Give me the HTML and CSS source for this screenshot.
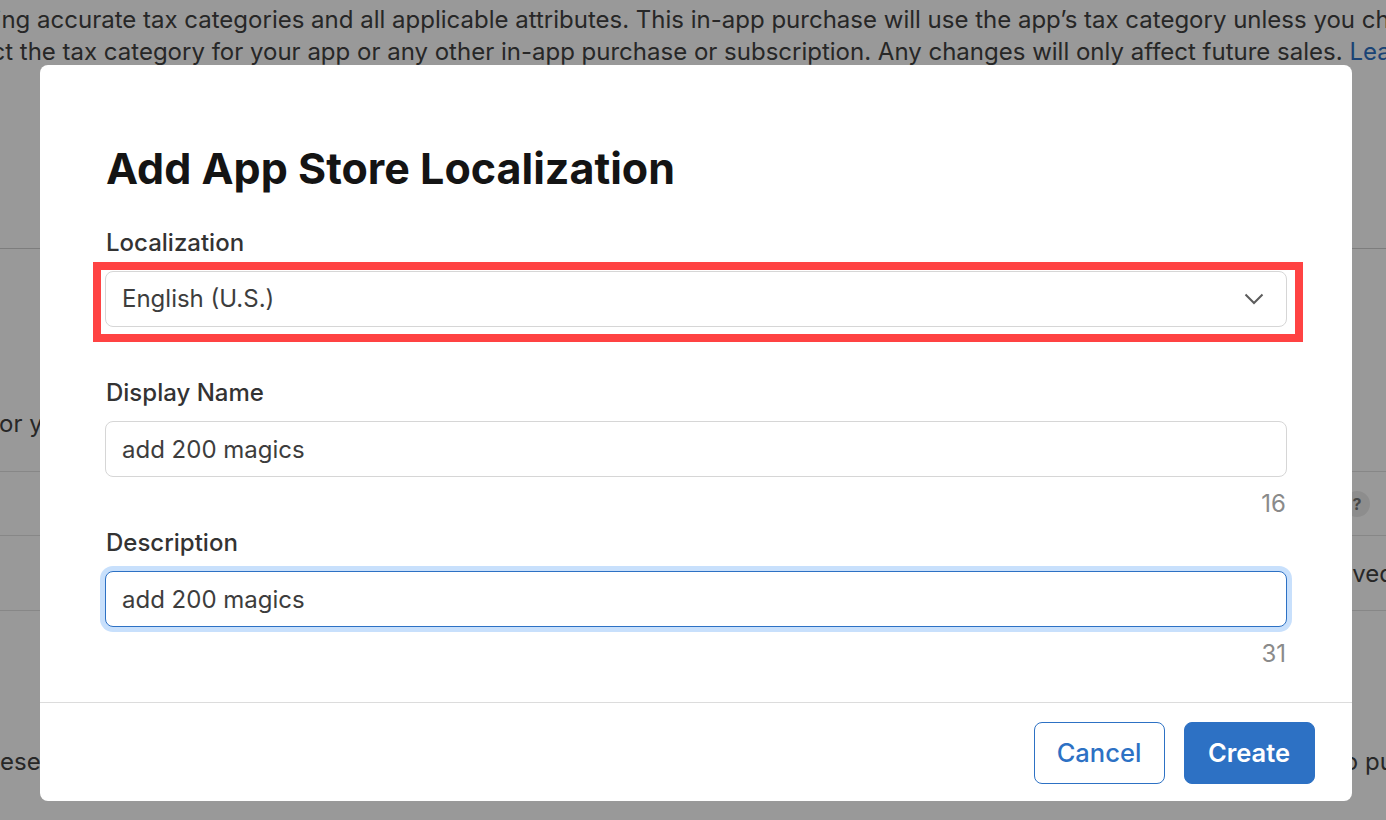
FILE: index.html
```html
<!DOCTYPE html>
<html lang="en">
<head>
<meta charset="utf-8">
<title>Add App Store Localization</title>
<link rel="stylesheet" href="styles.css">
</head>
<body>
<main class="page">
  <section class="intro">
    <p class="line line-one">Assigning accurate tax categories and all applicable attributes. This in-app purchase will use the app’s tax category unless you choose</p>
    <p class="line line-two">select the tax category for your app or any other in-app purchase or subscription. Any changes will only affect future sales. <a class="link" href="#">Learn More</a></p>
  </section>
  <section class="row row-a"><p class="line row-text left-or">or your</p></section>
  <section class="row row-b"><span class="help">?</span></section>
  <section class="row row-c"><p class="line row-text right-text">Approved</p></section>
  <section class="row row-d">
    <p class="line bottom-text"><span>these</span><span>to publish</span></p>
  </section>
</main>
<div class="overlay">
  <form class="modal">
    <div class="modal-body">
      <h1 class="title">Add App Store Localization</h1>
      <div class="field field-select">
        <label class="label">Localization</label>
        <div class="control select-control">
          <span>English (U.S.)</span>
          <svg class="chevron" width="20" height="12" viewBox="0 0 20 12" aria-hidden="true"><path d="M1.500 1.500 10 10l8.500-8.500" fill="none" stroke="#5c5c5c" stroke-width="2"/></svg>
          <span class="annotation"></span>
        </div>
      </div>
      <div class="field">
        <label class="label">Display Name</label>
        <div class="control"><span>add 200 magics</span></div>
        <div class="count">16</div>
      </div>
      <div class="field">
        <label class="label">Description</label>
        <div class="control control-focus"><span>add 200 magics</span></div>
        <div class="count">31</div>
      </div>
    </div>
    <div class="modal-footer">
      <button type="button" class="btn btn-secondary">Cancel</button>
      <button type="button" class="btn btn-primary">Create</button>
    </div>
  </form>
</div>
</body>
</html>
```
FILE: styles.css
```css
* { box-sizing: border-box; }
html, body { margin: 0; height: 100%; overflow: hidden; }
body {
  font-family: Inter, "Noto Sans", sans-serif;
  background: #fff;
  color: #333;
}
p { margin: 0; }
.page { height: 820px; overflow: hidden; }
.line {
  font-size: 24px;
  line-height: 32px;
  white-space: nowrap;
  color: #424242;
}
.intro {
  height: 249px;
  padding-top: 4px;
  border-bottom: 1px solid #d0d0d0;
}
.line-one { margin-left: -81px; }
.line-two { margin-left: -55px; }
.link { color: #2d71c4; text-decoration: none; }
.row { border-bottom: 1px solid #e2e2e2; }
.row-a { height: 223px; padding-top: 159px; }
.row-b {
  height: 64px;
  display: flex;
  justify-content: flex-end;
  align-items: center;
  padding-right: 16px;
}
.row-c { height: 75px; padding-top: 22px; display: flex; justify-content: flex-end; }
.row-d { border-bottom: 0; padding-top: 135px; }
.left-or { margin-left: -1px; }
.right-text { margin-right: -8px; }
.bottom-text { display: flex; justify-content: space-between; margin: 0 -61px 0 -22px; }
.help {
  width: 26px;
  height: 26px;
  border-radius: 50%;
  background: #ececec;
  color: #777;
  font-size: 16px;
  font-weight: 700;
  line-height: 26px;
  text-align: center;
}
.overlay {
  position: fixed;
  inset: 0;
  background: rgba(0, 0, 0, 0.4);
  display: flex;
  justify-content: center;
  align-items: flex-start;
  padding: 65px 0 0 6px;
}
.modal {
  width: 1312px;
  height: 736px;
  background: #fff;
  border-radius: 8px;
  display: flex;
  flex-direction: column;
}
.modal-body { flex: 1; padding: 74px 65px 0; }
.title {
  margin: 0 0 31px;
  padding-left: 1px;
  font-size: 43px;
  line-height: 58px;
  font-weight: 700;
  color: #141414;
}
.field { margin-bottom: 9px; }
.field-select { margin-bottom: 51px; }
.label {
  display: block;
  font-size: 24px;
  line-height: 30px;
  font-weight: 450;
  color: #333;
  padding-left: 1px;
  margin-bottom: 13px;
}
.control {
  position: relative;
  height: 56px;
  width: 1182px;
  display: flex;
  align-items: center;
  justify-content: space-between;
  padding: 0 22px 0 16px;
  background: #fff;
  border: 1px solid #d6d6d6;
  border-radius: 8px;
  font-size: 24px;
  color: #3d3d3d;
}
.select-control > span:first-child { padding-bottom: 1px; }
.control-focus {
  border-color: #2d71c4;
  box-shadow: 0 0 0 5px #c8e0fc;
}
.annotation {
  position: absolute;
  left: -13px;
  top: -10px;
  right: -17px;
  bottom: -16px;
  border: 8px solid #ff4343;
}
.chevron { display: block; }
.count {
  width: 1182px;
  text-align: right;
  font-size: 24px;
  line-height: 30px;
  color: #8a8a8a;
  margin-top: 12px;
  height: 30px;
  padding-right: 1px;
}
.modal-footer {
  flex: none;
  height: 99px;
  border-top: 1px solid #dcdcdc;
  display: flex;
  justify-content: flex-end;
  gap: 19px;
  padding: 19px 37px 0 0;
}
.btn {
  width: 131px;
  height: 62px;
  border-radius: 8px;
  padding: 0 1px 2px 0;
  font: 500 25.500px Inter, "Noto Sans", sans-serif;
  cursor: pointer;
}
.btn-secondary { background: #fff; border: 1px solid #2d71c4; color: #2d71c4; }
.btn-primary { background: #2d71c4; border: 1px solid #2d71c4; color: #fff; font-weight: 600; }
```
